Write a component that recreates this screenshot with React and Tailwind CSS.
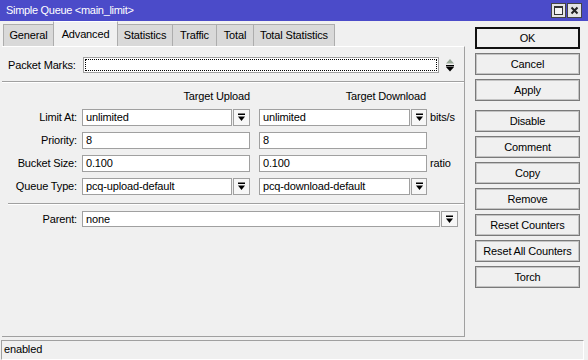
import React from 'react'

const font = { fontFamily: '"Liberation Sans", Arial, sans-serif' }

const DropIcon = () => (
  <svg width="9" height="9" viewBox="0 0 9 9">
    <rect x="1" y="0.5" width="7" height="1.5" fill="#000" />
    <path d="M1 3.5h7L4.5 8z" fill="#000" />
  </svg>
)

const DropBtn = ({ w = 'w-[17px]' }) => (
  <div className={`${w} h-full border border-[#a0a0a0] bg-[#f7f7f7] flex items-center justify-center shrink-0`}>
    <DropIcon />
  </div>
)

const Field = ({ value, className }) => (
  <div className={`h-full border border-[#a0a0a0] bg-white pl-[3px] flex items-center shrink-0 ${className}`}>
    {value}
  </div>
)

const Label = ({ children }) => (
  <div className="w-[76px] text-right pr-[1px] shrink-0">{children}</div>
)

const Sep = () => <div className="border-t border-[#a0a0a0] border-b border-b-white" />

const tabs = [
  { name: 'General', w: 'w-[51px]' },
  { name: 'Advanced', w: 'w-[65px]', active: true },
  { name: 'Statistics', w: 'w-[56px]' },
  { name: 'Traffic', w: 'w-[45px]' },
  { name: 'Total', w: 'w-[38px]' },
  { name: 'Total Statistics', w: 'w-[82px]' }
]

const buttons = ['OK', 'Cancel', 'Apply', 'Disable', 'Comment', 'Copy', 'Remove', 'Reset Counters', 'Reset All Counters', 'Torch']

export default function App() {
  return (
    <div
      className="w-[588px] h-[360px] bg-[#f0f0f0] flex flex-col text-[11px] tracking-[-0.15px] text-black overflow-hidden"
      style={font}
    >
      {/* Title bar */}
      <div className="h-[21px] bg-[#4b4bc9] flex items-center pl-[6px] pr-[6px] text-white shrink-0">
        <span className="flex-1 tracking-[-0.3px]">Simple Queue &lt;main_limit&gt;</span>
        <div className="flex gap-[1px]">
          <div className="w-[15px] h-[15px] bg-[#e4e4e4] border border-[#444] flex items-center justify-center">
            <div className="w-[9px] h-[9px] border border-[#333] border-t-2 bg-[#f4f4f4]" />
          </div>
          <div className="w-[15px] h-[15px] bg-[#e4e4e4] border border-[#444] flex items-center justify-center">
            <svg width="9" height="9" viewBox="0 0 9 9">
              <path d="M1.5 1.5l6 6M7.5 1.5l-6 6" stroke="#222" strokeWidth="2" />
            </svg>
          </div>
        </div>
      </div>

      <div className="flex h-[319px] shrink-0">
        {/* Left: tabs + panel */}
        <div className="w-[466px] flex flex-col">
          <div className="h-[25px] flex items-end pl-[3px]">
            {tabs.map((t, i) => (
              <div
                key={t.name}
                className={`${t.w} ${i > 0 ? '-ml-px' : ''} ${
                  t.active ? 'h-[25px] bg-[#f0f0f0] relative z-10 border-t-white' : 'h-[22px] bg-[#d9d9d9]'
                } border border-b-0 border-[#adadad] flex items-center justify-center whitespace-nowrap`}
              >
                {t.name}
              </div>
            ))}
          </div>
          <div className="ml-[2px] w-[463px] h-[291px] border-r border-b border-[#a0a0a0] border-t border-t-white bg-[#f0f0f0]">
            {/* Packet marks */}
            <div className="mt-[10px] h-[16px] flex items-center">
              <div className="w-[77px] pl-[6px] shrink-0">Packet Marks:</div>
              <div className="ml-[4px] w-[356px] h-full border border-[#a0a0a0] bg-white p-[1px] shrink-0">
                <div className="w-full h-full border border-dotted border-black" />
              </div>
              <div className="ml-[6px]">
                <svg width="10" height="16" viewBox="0 0 10 16">
                  <path d="M1 6.5h8L5 2z" fill="#97a797" />
                  <rect x="1" y="8" width="8" height="1.5" fill="#000" />
                  <path d="M1 10h8L5 14.5z" fill="#000" />
                </svg>
              </div>
            </div>
            <div className="mt-[8px]">
              <Sep />
            </div>

            {/* Headers */}
            <div className="mt-[7px] h-[13px] leading-[13px] flex">
              <div className="w-[248px] text-right">Target Upload</div>
              <div className="w-[176px] text-right">Target Download</div>
            </div>

            <div className="mt-[6px] flex flex-col gap-[6px]">
              <div className="h-[17px] flex items-center">
                <Label>Limit At:</Label>
                <Field className="ml-[4px] w-[150px]" value="unlimited" />
                <div className="ml-[1px] h-full flex">
                  <DropBtn />
                </div>
                <Field className="ml-[9px] w-[151px]" value="unlimited" />
                <div className="ml-[1px] h-full flex">
                  <DropBtn w="w-[16px]" />
                </div>
                <span className="ml-[3px]">bits/s</span>
              </div>
              <div className="h-[17px] flex items-center">
                <Label>Priority:</Label>
                <Field className="ml-[4px] w-[168px]" value="8" />
                <Field className="ml-[9px] w-[168px]" value="8" />
              </div>
              <div className="h-[17px] flex items-center">
                <Label>Bucket Size:</Label>
                <Field className="ml-[4px] w-[168px]" value="0.100" />
                <Field className="ml-[9px] w-[168px]" value="0.100" />
                <span className="ml-[3px]">ratio</span>
              </div>
              <div className="h-[17px] flex items-center">
                <Label>Queue Type:</Label>
                <Field className="ml-[4px] w-[150px]" value="pcq-upload-default" />
                <div className="ml-[1px] h-full flex">
                  <DropBtn />
                </div>
                <Field className="ml-[9px] w-[151px]" value="pcq-download-default" />
                <div className="ml-[1px] h-full flex">
                  <DropBtn w="w-[16px]" />
                </div>
              </div>
            </div>

            <div className="mt-[8px] ml-[6px]">
              <Sep />
            </div>

            <div className="mt-[6px] h-[16px] flex items-center">
              <Label>Parent:</Label>
              <Field className="ml-[4px] w-[358px]" value="none" />
              <div className="ml-[1px] h-full flex">
                <DropBtn />
              </div>
            </div>
          </div>
        </div>

        {/* Right: buttons */}
        <div className="ml-[9px] w-[105px] pt-[6px] flex flex-col gap-[4px]">
          {buttons.map((b) => (
            <div
              key={b}
              className={`h-[22px] shrink-0 flex items-center justify-center bg-[#f0f0f0] whitespace-nowrap ${
                b === 'OK' ? 'border-2 border-[#111]' : 'border border-[#7a7a7a] shadow-[inset_0_0_0_1px_#c4c4c4]'
              } ${b === 'Disable' ? 'mt-[5px]' : ''}`}
            >
              {b}
            </div>
          ))}
        </div>
      </div>

      {/* Status bar */}
      <div className="h-[20px] w-[583px] ml-[1px] border-t border-l border-[#a0a0a0] border-r border-r-white border-b border-b-white flex items-center pl-[2px] pb-[2px]">
        enabled
      </div>
    </div>
  )
}
